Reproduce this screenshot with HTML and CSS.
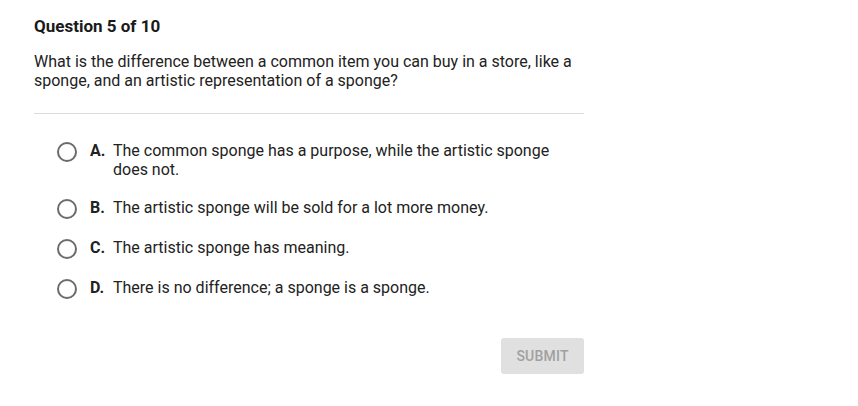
FILE: index.html
```html
<!DOCTYPE html>
<html>
<head>
<meta charset="utf-8">
<link rel="stylesheet" href="styles.css">
</head>
<body>
<div class="quiz">
  <h1 class="title">Question 5 of 10</h1>
  <p class="question">What is the difference between a common item you can buy in a store, like a sponge, and an artistic representation of a sponge?</p>
  <hr class="divider">
  <ul class="options">
    <li class="option option-first"><span class="radio"></span><span class="letter">A.</span><span class="text">The common sponge has a purpose, while the artistic sponge does not.</span></li>
    <li class="option"><span class="radio"></span><span class="letter">B.</span><span class="text">The artistic sponge will be sold for a lot more money.</span></li>
    <li class="option"><span class="radio"></span><span class="letter">C.</span><span class="text">The artistic sponge has meaning.</span></li>
    <li class="option"><span class="radio"></span><span class="letter">D.</span><span class="text">There is no difference; a sponge is a sponge.</span></li>
  </ul>
  <div class="actions">
    <button class="submit">SUBMIT</button>
  </div>
</div>
</body>
</html>
```
FILE: styles.css
```css
html, body {
  margin: 0;
  padding: 0;
  background: #ffffff;
}
body {
  font-family: Roboto, "Liberation Sans", Arial, sans-serif;
  color: #222222;
}
.quiz {
  width: 550px;
  padding: 17px 0 0 34px;
}
.title {
  margin: 0;
  font-size: 17px;
  line-height: 19px;
  font-weight: 700;
  color: #1a1a1a;
}
.question {
  margin: 16px 0 0;
  font-size: 16px;
  line-height: 19px;
}
.divider {
  margin: 23px 0 0;
  border: 0;
  border-top: 1px solid #dcdcdc;
  height: 0;
}
.options {
  list-style: none;
  margin: 17px 0 0;
  padding: 0 0 0 23px;
}
.option {
  display: flex;
  align-items: flex-start;
  padding: 10px 0;
  font-size: 16px;
  line-height: 19px;
}
.option-first {
  padding-bottom: 9px;
}
.radio {
  flex: none;
  width: 16px;
  height: 16px;
  border: 2px solid #6b6b6b;
  border-radius: 50%;
  margin: 1px 13px -1px 0;
}
.letter {
  flex: none;
  font-weight: 700;
  width: 23px;
}
.text {
  flex: 1;
  padding-right: 30px;
}
.actions {
  display: flex;
  justify-content: flex-end;
  margin-top: 30px;
}
.submit {
  width: 83px;
  height: 36px;
  border: 0;
  border-radius: 3px;
  background: #e0e0e0;
  color: #a0a0a0;
  font-family: Roboto, "Liberation Sans", Arial, sans-serif;
  font-size: 14px;
  font-weight: 500;
  letter-spacing: 0.2px;
}
```
